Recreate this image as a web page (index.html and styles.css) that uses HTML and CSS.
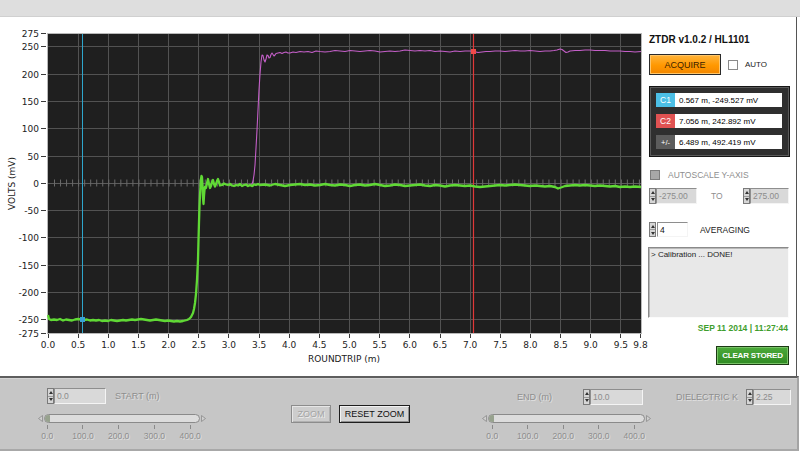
FILE: index.html
```html
<!DOCTYPE html>
<html>
<head>
<meta charset="utf-8">
<title>ZTDR</title>
<link rel="stylesheet" href="styles.css">
</head>
<body>
<div class="topbar"></div>
<div class="main">
  <div class="chart">
    <svg width="645" height="359" viewBox="0 17 645 359">
      <rect x="47.5" y="33.5" width="594" height="300" fill="#1f1f1f" stroke="#b9b9b9"/>
      <path class="grid" d="M78.5 34V333M108.5 34V333M138.5 34V333M168.5 34V333M198.5 34V333M228.5 34V333M259.5 34V333M289.5 34V333M319.5 34V333M349.5 34V333M379.5 34V333M409.5 34V333M440.5 34V333M470.5 34V333M500.5 34V333M530.5 34V333M560.5 34V333M590.5 34V333M620.5 34V333M48 46.5H641M48 74.5H641M48 101.5H641M48 128.5H641M48 156.5H641M48 210.5H641M48 237.5H641M48 265.5H641M48 292.5H641M48 319.5H641"/>
      <line x1="48" y1="183.5" x2="641" y2="183.5" stroke="#5c5c5c"/>
      <line x1="54" y1="183" x2="641" y2="183" stroke="#6a6a6a" stroke-width="7" stroke-dasharray="1 5.03"/>
      <line x1="82.5" y1="34" x2="82.5" y2="333" stroke="#2ea6cc"/>
      <line class="redcur" x1="473.5" y1="34" x2="473.5" y2="333"/>
      <polyline class="pink" points="228,185 240,185.5 250,185 252,184 253,181 254,175 255,165 256,148 257,130 258,110 259,90 260,74 261,62 262,55 263,55.5 264,60 265,62 266,59 267,55 268,55.5 269,58 270,57.5 271,54.5 272,53 273,54.5 274,56 275,55 276,53.5 278,53 280,52.5 282,53.5 284,52.5 286,52 288,53 290,53 293,52 296,52.5 300,51.5 304,52 308,51.5 312,52.5 316,51 320,51.5 325,52 330,51.5 335,50.5 340,51 345,51.5 350,50.5 355,51 360,51.5 365,51 370,50.5 375,51 380,52 385,51.5 390,51 395,51.5 400,51 405,50 410,50.5 415,51 420,50.5 425,51 430,50.5 435,51.5 440,51 445,51.5 450,52 455,51 460,51.5 465,51 470,51 474,51.5 478,52.5 482,52 486,51.5 490,51.5 495,51 500,51 505,51.5 510,51 515,50.5 520,51 525,51 530,50.5 535,51 540,51.5 545,51 550,51 554,50.5 557,50 560,49 562,49.5 564,51 566,52.5 568,52 570,51 575,50.5 580,50.5 585,50 590,50 595,50.5 600,50.5 605,50.5 610,51 615,51 620,51 625,51.5 630,51.5 635,52 641,51.5"/>
      <polyline class="green" points="48,315 49,319 51,320 54,319.5 57,320 60,319 63,320.5 66,319.5 69,320 72,320.5 75,319.5 78,319 81,319.5 84,320 87,319.5 90,320.5 93,320 96,320.5 99,320 102,321 105,320.5 108,321 111,320 114,320.5 117,321 120,320.5 123,320 126,320.5 129,320 132,319.5 135,320 138,319.5 141,319 144,319.5 147,320 150,320.5 153,320 156,319.5 159,320 162,320.5 165,321 168,320.5 171,321 174,321.5 177,321 180,321.5 183,321 185,320.5 187,320 189,319 191,317 193,313 194,309 195,303 196,294 197,280 198,260 198.5,240 199,222 199.5,206 200,195 200.5,186 201,179 201.5,176 202,177 202.5,185 203,198 203.5,204 204,196 204.5,190 205,187 206,188 207,183 208,179 209,184 210,188 211,186 212,182 213,180 214,184 215,186.5 216,184 217,181 218,179 219,182 220,185.5 222,185 224,183.5 226,184.5 228,185 230,184 232,185.5 234,186 236,185 238,185.5 240,184 242,186 244,185 246,184.5 248,186 250,185 252,186 254,184.5 256,185 258,184 260,185 265,184.5 270,185.5 275,184 280,185 285,186 290,185 295,184.5 300,184 305,185 310,184.5 315,185.5 320,185 325,184 330,185 335,185.5 340,184.5 345,185 350,186 355,185 360,184.5 365,185.5 370,185 375,184 380,185 385,186 390,185.5 395,184.5 400,185 405,186 410,185.5 415,185 420,184.5 425,185.5 430,186 435,185 440,185.5 445,186.5 450,185.5 455,185 460,185.5 465,186 470,185.5 475,186.5 480,187 485,186.5 490,186 495,185.5 500,185 505,185.5 510,185 515,184.5 520,185 525,185.5 530,186 535,185.5 540,186 545,186.5 550,186 555,187 558,188.5 561,187.5 565,186 570,185.5 575,185 580,185.5 585,185 590,185.5 595,186 600,185.5 605,186 610,186.5 615,186 620,187 625,186.5 630,187 635,186.5 641,187"/>
      <rect x="80" y="317" width="5" height="5" fill="#3aa2d4"/>
      <rect x="471" y="49" width="5" height="5" fill="#f04a4a"/>
      <path class="tick" d="M41 33.5H46M41 46.5H46M41 74.5H46M41 101.5H46M41 128.5H46M41 156.5H46M41 183.5H46M41 210.5H46M41 237.5H46M41 265.5H46M41 292.5H46M41 319.5H46M41 333.5H46M48.5 334V338M78.5 334V338M108.5 334V338M138.5 334V338M168.5 334V338M198.5 334V338M228.5 334V338M259.5 334V338M289.5 334V338M319.5 334V338M349.5 334V338M379.5 334V338M409.5 334V338M440.5 334V338M470.5 334V338M500.5 334V338M530.5 334V338M560.5 334V338M590.5 334V338M620.5 334V338M640.5 334V338"/>
      <g class="ax ylab">
        <text x="39" y="36.8">275</text>
        <text x="39" y="49.8">250</text>
        <text x="39" y="77.8">200</text>
        <text x="39" y="104.8">150</text>
        <text x="39" y="131.8">100</text>
        <text x="39" y="159.8">50</text>
        <text x="39" y="186.8">0</text>
        <text x="39" y="213.8">-50</text>
        <text x="39" y="240.8">-100</text>
        <text x="39" y="268.8">-150</text>
        <text x="39" y="295.8">-200</text>
        <text x="39" y="322.8">-250</text>
        <text x="39" y="336.8">-275</text>
      </g>
      <g class="ax xlab">
        <text x="48" y="348">0.0</text>
        <text x="78.2" y="348">0.5</text>
        <text x="108.3" y="348">1.0</text>
        <text x="138.5" y="348">1.5</text>
        <text x="168.6" y="348">2.0</text>
        <text x="198.8" y="348">2.5</text>
        <text x="228.9" y="348">3.0</text>
        <text x="259.1" y="348">3.5</text>
        <text x="289.2" y="348">4.0</text>
        <text x="319.4" y="348">4.5</text>
        <text x="349.5" y="348">5.0</text>
        <text x="379.7" y="348">5.5</text>
        <text x="409.8" y="348">6.0</text>
        <text x="440" y="348">6.5</text>
        <text x="470.1" y="348">7.0</text>
        <text x="500.3" y="348">7.5</text>
        <text x="530.4" y="348">8.0</text>
        <text x="560.6" y="348">8.5</text>
        <text x="590.7" y="348">9.0</text>
        <text x="620.9" y="348">9.5</text>
        <text x="640.5" y="348">9.8</text>
      </g>
      <text class="ax xlab" x="344" y="361.5">ROUNDTRIP (m)</text>
      <text class="ax xlab" transform="translate(14.8 183.5) rotate(-90)">VOLTS (mV)</text>
    </svg>
  </div>
  <div class="side">
    <div class="title">ZTDR v1.0.2 / HL1101</div>
    <div class="acq-row">
      <div class="acquire">ACQUIRE</div>
      <div class="cb"></div>
      <span class="auto">AUTO</span>
    </div>
    <div class="cursors">
      <div class="crow"><span class="chip c1">C1</span><span class="cval">0.567 m, -249.527 mV</span></div>
      <div class="crow"><span class="chip c2">C2</span><span class="cval">7.056 m, 242.892 mV</span></div>
      <div class="crow"><span class="chip cpm">+/-</span><span class="cval">6.489 m, 492.419 mV</span></div>
    </div>
    <div class="autoscale">
      <div class="cb dis"></div>
      <span class="dtext">AUTOSCALE Y-AXIS</span>
    </div>
    <div class="spin-row">
      <div class="spin"><div class="arrows"><span class="up"></span><span class="dn"></span></div><div class="field w41">-275.00</div></div>
      <span class="to">TO</span>
      <div class="spin"><div class="arrows"><span class="up"></span><span class="dn"></span></div><div class="field w39">275.00</div></div>
    </div>
    <div class="avg-row">
      <div class="spin"><div class="arrows"><span class="up"></span><span class="dn"></span></div><div class="field white w32">4</div></div>
      <span class="avg">AVERAGING</span>
    </div>
    <div class="log">&gt; Calibration ... DONE!</div>
    <div class="date">SEP 11 2014 | 11:27:44</div>
    <div class="clear">CLEAR STORED</div>
  </div>
</div>
<div class="bottom">
  <div class="g-start">
    <div class="srow">
      <div class="spin"><div class="arrows"><span class="up"></span><span class="dn"></span></div><div class="field w52">0.0</div></div>
      <span class="lbl ml9">START (m)</span>
    </div>
    <div class="slider">
      <div class="track-row">
        <svg class="tri" width="5" height="7" viewBox="0 0 5 7"><polygon points="4.5,0.5 0.5,3.5 4.5,6.5" fill="#cfcfcf" stroke="#8a8a8a" stroke-width="0.8"/></svg>
        <div class="track w156"></div>
        <svg class="tri" width="5" height="7" viewBox="0 0 5 7"><polygon points="0.5,0.5 4.5,3.5 0.5,6.5" fill="#cfcfcf" stroke="#8a8a8a" stroke-width="0.8"/></svg>
      </div>
      <div class="scale s1">
        <div class="tk"><span>0.0</span></div>
        <div class="tk"><span>100.0</span></div>
        <div class="tk"><span>200.0</span></div>
        <div class="tk"><span>300.0</span></div>
        <div class="tk"><span>400.0</span></div>
      </div>
    </div>
  </div>
  <div class="btns">
    <div class="btn zoom">ZOOM</div>
    <div class="btn reset">RESET ZOOM</div>
  </div>
  <div class="g-end">
    <div class="srow end">
      <span class="lbl w66">END (m)</span>
      <div class="spin"><div class="arrows"><span class="up"></span><span class="dn"></span></div><div class="field w53">10.0</div></div>
    </div>
    <div class="slider s2wrap">
      <div class="track-row">
        <svg class="tri" width="5" height="7" viewBox="0 0 5 7"><polygon points="4.5,0.5 0.5,3.5 4.5,6.5" fill="#cfcfcf" stroke="#8a8a8a" stroke-width="0.8"/></svg>
        <div class="track w157"></div>
        <svg class="tri" width="5" height="7" viewBox="0 0 5 7"><polygon points="0.5,0.5 4.5,3.5 0.5,6.5" fill="#cfcfcf" stroke="#8a8a8a" stroke-width="0.8"/></svg>
      </div>
      <div class="scale s2">
        <div class="tk"><span>0.0</span></div>
        <div class="tk"><span>100.0</span></div>
        <div class="tk"><span>200.0</span></div>
        <div class="tk"><span>300.0</span></div>
        <div class="tk"><span>400.0</span></div>
      </div>
    </div>
  </div>
  <div class="g-diel">
    <div class="srow">
      <span class="lbl w70">DIELECTRIC K</span>
      <div class="spin"><div class="arrows"><span class="up"></span><span class="dn"></span></div><div class="field w38">2.25</div></div>
    </div>
  </div>
</div>
</body>
</html>
```
FILE: styles.css
```css
* { box-sizing: border-box; }
html, body { margin: 0; padding: 0; }
body {
  width: 800px;
  height: 451px;
  overflow: hidden;
  background: #ffffff;
  font-family: "Liberation Sans", Arial, sans-serif;
  color: #111;
}
.topbar { height: 17px; background: #dedede; border-bottom: 1px solid #d0d0d0; }
.main { display: flex; height: 359px; }
.chart { width: 645px; height: 359px; }
.chart svg { display: block; overflow: visible; }
.grid { stroke: #525252; stroke-width: 1; fill: none; }
.tick { stroke: #3a3a3a; stroke-width: 1; fill: none; }
.redcur { stroke: #e03838; stroke-width: 1.2; }
.pink { fill: none; stroke: #c45fc8; stroke-width: 1.1; stroke-linejoin: round; }
.green { fill: none; stroke: #60d935; stroke-width: 2.3; stroke-linejoin: round; }
.ax { font-family: "DejaVu Sans", sans-serif; font-size: 9px; fill: #222; }
.ylab { text-anchor: end; }
.xlab { text-anchor: middle; }

.side {
  width: 152px;
  border-right: 1px solid #555;
  padding: 0 7px 0 4px;
  display: flex;
  flex-direction: column;
}
.title { margin-top: 17px; font-weight: bold; font-size: 10px; line-height: 12px; white-space: nowrap; color: #111; }
.acq-row { margin-top: 8px; height: 21px; display: flex; align-items: center; }
.acquire {
  width: 72px; height: 21px;
  border: 1px solid #2a2a2a;
  background: linear-gradient(#ffb43c, #ff9800 55%, #f28600);
  box-shadow: inset 0 0 0 1px #ffc66a;
  font-size: 9px; color: #3a2200;
  display: flex; align-items: center; justify-content: center;
}
.cb { width: 10px; height: 10px; border: 1px solid #8a8a8a; background: #fff; }
.acq-row .cb { margin-left: 7px; }
.auto { margin-left: 7px; font-size: 8px; color: #222; }

.cursors {
  margin-top: 11px;
  width: 141px; height: 71px;
  background: #2f2f2f;
  border: 1px solid #151515;
  box-shadow: inset 0 0 0 1px #5a5a5a;
  padding: 6px 7px 0 6px;
  display: flex; flex-direction: column; gap: 7px;
}
.crow { display: flex; height: 14px; }
.chip { width: 19px; color: #fff; font-size: 8.5px; display: flex; align-items: center; justify-content: center; }
.c1 { background: #4cbfe6; }
.c2 { background: #e05252; }
.cpm { background: #5c5c5c; font-size: 7.5px; }
.cval { width: 107px; background: #fff; font-size: 8px; padding-left: 4px; display: flex; align-items: center; white-space: nowrap; color: #000; }

.autoscale { margin-top: 13px; height: 10px; display: flex; align-items: center; }
.cb.dis { margin-left: 1px; background: #a8a8a8; border-color: #7c7c7c; }
.dtext { margin-left: 8px; font-size: 8.5px; color: #8e8e8e; }

.spin-row { margin-top: 8px; height: 16px; display: flex; align-items: stretch; }
.avg-row { margin-top: 18px; height: 15px; display: flex; align-items: stretch; }
.spin { display: flex; height: 100%; }
.srow .spin { height: 16px; }
.arrows {
  width: 7px;
  display: flex; flex-direction: column;
  border: 1px solid #7a7a7a;
  background: #d6d6d6;
}
.arrows span { flex: 1; display: flex; align-items: center; justify-content: center; }
.arrows span + span { border-top: 1px solid #9a9a9a; }
.arrows .up::before { content: ""; border-left: 2px solid transparent; border-right: 2px solid transparent; border-bottom: 3px solid #333; }
.arrows .dn::before { content: ""; border-left: 2px solid transparent; border-right: 2px solid transparent; border-top: 3px solid #333; }
.field {
  background: #d9d9d9;
  border: 1px solid;
  border-color: #8e8e8e #f4f4f4 #f4f4f4 #8e8e8e;
  font-size: 8.5px; color: #8c8c8c;
  padding-left: 2px;
  display: flex; align-items: center;
  white-space: nowrap;
}
.field.white { background: #fff; color: #111; margin-left: 1px; }
.w32 { width: 31px; }
.w38 { width: 38px; }
.w39 { width: 39px; }
.w41 { width: 41px; }
.w52 { width: 52px; }
.w53 { width: 53px; }
.to { width: 32px; margin-left: 14px; font-size: 8.5px; color: #8e8e8e; display: flex; align-items: center; }
.avg { margin-left: 12px; font-size: 8.5px; color: #222; display: flex; align-items: center; }

.log {
  margin-top: 10px; margin-left: -1px;
  width: 141px; height: 71px;
  background: #e8e8e8;
  border: 1px solid;
  border-color: #8a8a8a #fbfbfb #fbfbfb #8a8a8a;
  box-shadow: inset 1px 1px 0 #b8b8b8;
  font-size: 8px; line-height: 10px; color: #222;
  padding: 2px 2px;
}
.date { margin-top: 5px; margin-right: 1px; text-align: right; font-weight: bold; font-size: 8.5px; line-height: 10px; color: #3f9e2e; white-space: nowrap; }
.clear {
  margin-top: 13px;
  align-self: flex-end;
  width: 73px; height: 19px;
  background: linear-gradient(#4caa3a, #2f8a22);
  border: 1px solid #1c3a14;
  box-shadow: inset 0 0 0 1px #78c266;
  color: #fff; font-size: 8px; font-weight: bold; letter-spacing: -0.2px;
  display: flex; align-items: center; justify-content: center;
  white-space: nowrap;
}

.bottom {
  width: 799px; height: 75px;
  background: #c6c6c6;
  border-top: 2px solid #5e5e5e;
  border-right: 2px solid #a4a4a4;
  border-bottom: 2px solid #a8a8a8;
  box-shadow: inset 0 1px 0 #d4d4d4;
  display: flex; align-items: flex-start;
}
.g-start { margin-left: 38px; width: 170px; }
.srow { margin-top: 10px; height: 16px; display: flex; align-items: center; padding-left: 9px; }
.srow.end { margin-top: 11px; padding-left: 35px; }
.g-diel .srow { margin-top: 11px; padding-left: 0; }
.lbl { font-size: 9px; color: #8e8e8e; text-shadow: 1px 1px 0 #e0e0e0; white-space: nowrap; }
.ml9 { margin-left: 9px; }
.w66 { width: 66px; }
.w70 { width: 70px; }
.slider { margin-top: 10px; }
.s2wrap { margin-top: 9px; }
.track-row { display: flex; align-items: center; height: 9px; }
.tri { display: block; }
.track {
  height: 9px; margin: 0 1px;
  border: 1px solid #8a8a8a; border-radius: 5px;
  background: #dcdcdc;
  display: flex;
}
.track::before { content: ""; width: 5px; height: 100%; background: #97a28e; border-radius: 4px 1px 1px 4px; }
.w156 { width: 156px; }
.w157 { width: 157px; }
.scale { display: flex; margin-top: 2px; }
.s1 { margin-left: -8.6px; }
.s2 { margin-left: -7.5px; }
.s1 .tk { width: 37.25px; }
.s2 .tk { width: 37px; }
.tk { display: flex; flex-direction: column; align-items: center; }
.tk::before { content: ""; width: 1px; height: 4px; background: #8a8a8a; }
.tk span { margin-top: 2px; font-size: 8.5px; line-height: 10px; color: #8e8e8e; text-shadow: 1px 1px 0 #e0e0e0; white-space: nowrap; }

.btns { display: flex; gap: 8px; margin-left: 83px; margin-top: 27px; }
.btn { height: 18px; font-size: 9px; display: flex; align-items: center; justify-content: center; white-space: nowrap; }
.zoom {
  width: 40px;
  border: 1px solid #8c8c8c;
  background: #cdcdcd;
  box-shadow: inset 1px 1px 0 #e6e6e6, inset -1px -1px 0 #b0b0b0;
  color: #a4a4a4; text-shadow: 1px 1px 0 #ececec;
}
.reset {
  width: 71px;
  border: 1px solid #1e1e1e;
  background: #d4d4d4;
  box-shadow: inset 1px 1px 0 #f2f2f2, inset -1px -1px 0 #8e8e8e;
  color: #111;
}
.g-end { margin-left: 72px; width: 170px; }
.g-diel { margin-left: 24px; }
```
